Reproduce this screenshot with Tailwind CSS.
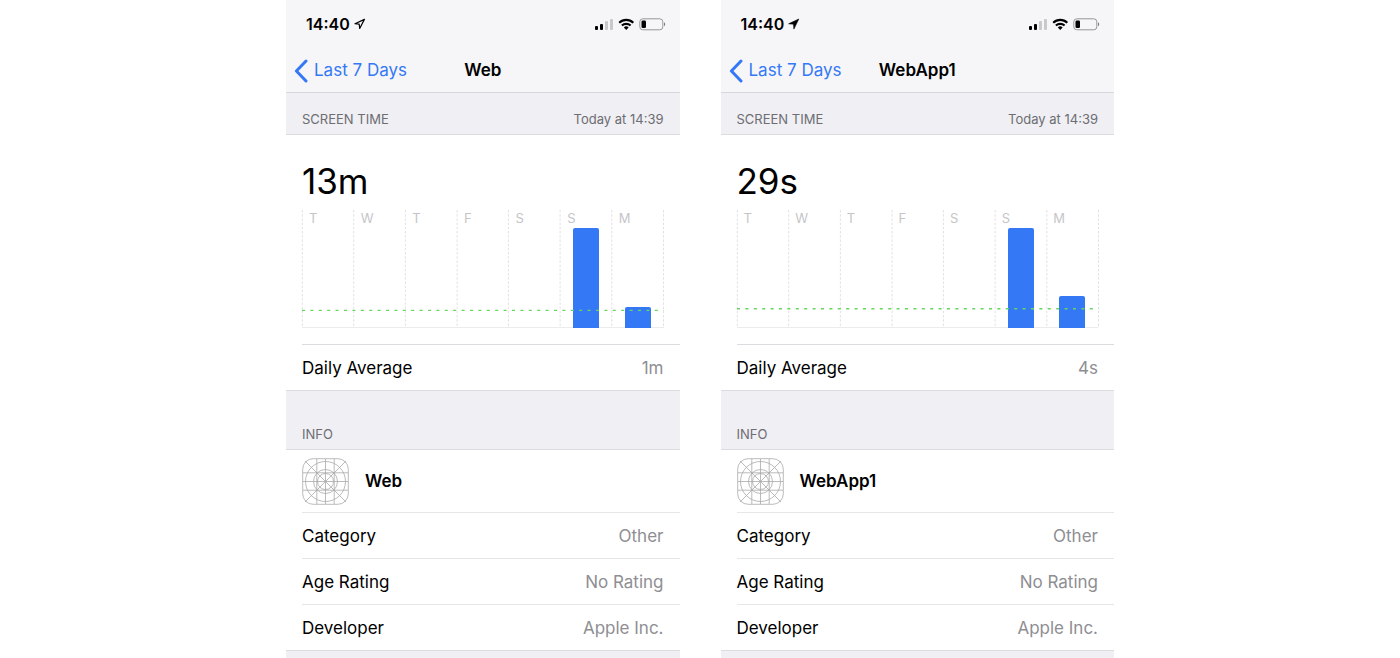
<!DOCTYPE html>
<html lang="en">
	<head>
		<meta charset="utf-8" />
		<meta name="viewport" content="width=device-width, initial-scale=1" />
		<title>Screen Time</title>
		<script src="https://cdn.jsdelivr.net/npm/@tailwindcss/browser@4"></script>
	</head>
	<body class="bg-white font-['Inter','Liberation_Sans',sans-serif] text-black">
		<!-- shared icons -->
		<svg class="hidden">
			<symbol id="status" viewBox="0 0 71 14">
				<rect x="0" y="9" width="3" height="4" rx="1" />
				<rect x="5" y="7" width="3" height="6" rx="1" />
				<rect x="10" y="4" width="3" height="9" rx="1" fill="#c9c9cb" />
				<rect x="15" y="2" width="3" height="11" rx="1" fill="#c9c9cb" />
				<g fill="none" stroke="#000" stroke-width="2.1">
					<path d="M24.2 5.7a10.2 10.2 0 0 1 14.1 0" />
					<path d="M26.9 8.6a6.3 6.3 0 0 1 8.7 0" />
				</g>
				<path d="M31.25 12.9l-2.4-2.5a3.5 3.5 0 0 1 4.8 0z" />
				<rect x="44.8" y="1.8" width="23" height="11" rx="3" fill="none" stroke="#98989b" />
				<path d="M69 5.3c1.6.6 1.6 3.4 0 4z" fill="#7c7c7f" />
				<rect x="46.5" y="3.5" width="4.5" height="7.6" rx="1.3" />
			</symbol>
			<symbol id="grid-icon" viewBox="0 0 47 47">
				<g fill="none" stroke="#a9a9ab" stroke-width="0.8">
					<rect x="0.7" y="0.7" width="45.6" height="45.6" rx="10.5" />
					<path d="M3 3l41 41M44 3L3 44" />
					<path d="M14.8 1v45M23.5 1v45M32.2 1v45M1 14.8h45M1 23.5h45M1 32.2h45" />
					<circle cx="23.5" cy="23.5" r="20" />
					<circle cx="23.5" cy="23.5" r="12" />
					<circle cx="23.5" cy="23.5" r="8" />
				</g>
			</symbol>
			<symbol id="back" viewBox="0 0 14 24">
				<path d="M12 2L2.4 12 12 22" fill="none" stroke="#3478f6" stroke-width="3" stroke-linecap="round" stroke-linejoin="round" />
			</symbol>
		</svg>

		<main class="mx-auto grid min-h-screen max-w-[828px] grid-cols-2 gap-[41px] overflow-hidden">
			<section class="bg-[#efeff4]">
				<header class="border-b border-[#d8d8dc] bg-[#f6f6f8]">
					<div class="flex h-12 items-center pl-5 pr-[14px]">
						<span class="text-[16px] font-semibold">14:40</span>
						<svg class="ml-1 size-3" viewBox="0 0 12 12">
							<path d="M10.4 1.4L1 5.7l4.2.5.5 4.3z" fill="none" stroke="#000" stroke-width="1.2" stroke-linejoin="round" />
						</svg>
						<svg class="ml-auto h-[14px] w-[71px]"><use href="#status" /></svg>
					</div>
					<nav class="flex h-11 items-center px-2 pt-0.5">
						<a href="#" class="flex flex-1 items-center gap-1.5 whitespace-nowrap text-[17px] text-[#3478f6]">
							<svg class="h-6 w-[14px]"><use href="#back" /></svg>
							Last 7 Days
						</a>
						<h1 class="text-[17px] font-semibold">Web</h1>
						<span class="flex-1"></span>
					</nav>
				</header>

				<div class="flex h-[41px] items-end justify-between px-4 pb-[5px] text-[13px] text-[#6d6d72]">
					<h2>SCREEN TIME</h2>
					<span>Today at 14:39</span>
				</div>

				<div class="border-y border-[#dcdce0] bg-white pl-4">
					<div class="pr-4 pt-6">
						<p class="text-[35px] leading-[44px]">13m</p>
						<div class="relative mt-[7px] grid h-[118px] grid-cols-7 text-[13px] leading-4 text-[#c5c5c8] shadow-[inset_0_-1px_0_#ececee]">
							<div class="pl-[7px]">T</div>
							<div class="pl-[7px]">W</div>
							<div class="pl-[7px]">T</div>
							<div class="pl-[7px]">F</div>
							<div class="pl-[7px]">S</div>
							<div class="flex flex-col">
								<span class="pl-[7px]">S</span>
								<div class="mx-auto mt-auto w-[26px] rounded-t-xs bg-[#3478f6]" style="height: 100px"></div>
							</div>
							<div class="flex flex-col">
								<span class="pl-[7px]">M</span>
								<div class="mx-auto mt-auto w-[26px] rounded-t-xs bg-[#3478f6]" style="height: 21px"></div>
							</div>
							<svg class="absolute inset-0 h-full w-full overflow-visible">
								<g stroke="#e2e2e5" stroke-dasharray="2.5 1.7">
									<line x1="0.1%" x2="0.1%" y2="100%" />
									<line x1="14.3%" x2="14.3%" y2="100%" />
									<line x1="28.6%" x2="28.6%" y2="100%" />
									<line x1="42.9%" x2="42.9%" y2="100%" />
									<line x1="57.1%" x2="57.1%" y2="100%" />
									<line x1="71.4%" x2="71.4%" y2="100%" />
									<line x1="85.7%" x2="85.7%" y2="100%" />
									<line x1="100%" x2="100%" y2="100%" />
								</g>
								<line x2="100%" y1="100.4" y2="100.4" stroke="#65d65c" stroke-width="1.4" stroke-dasharray="3 5.4" />
							</svg>
						</div>
					</div>
					<dl class="mt-4 flex h-[46px] items-center justify-between border-t border-[#dcdce0] pr-4 pt-0.5 text-[17px]">
						<dt>Daily Average</dt>
						<dd class="text-[#8e8e93]">1m</dd>
					</dl>
				</div>

				<h2 class="flex h-[58px] items-end px-4 pb-[5px] text-[13px] text-[#6d6d72]">INFO</h2>

				<div class="border-y border-[#dcdce0] bg-white pl-4 text-[17px]">
					<div class="flex h-[62px] items-center gap-4">
						<svg class="size-[47px]"><use href="#grid-icon" /></svg>
						<h3 class="pt-0.5 font-semibold">Web</h3>
					</div>
					<dl>
						<div class="flex h-[46px] items-center justify-between border-t border-[#e6e6e9] pr-4 pt-0.5">
							<dt>Category</dt>
							<dd class="text-[#8e8e93]">Other</dd>
						</div>
						<div class="flex h-[46px] items-center justify-between border-t border-[#e6e6e9] pr-4 pt-0.5">
							<dt>Age Rating</dt>
							<dd class="text-[#8e8e93]">No Rating</dd>
						</div>
						<div class="flex h-[46px] items-center justify-between border-t border-[#e6e6e9] pr-4 pt-0.5">
							<dt>Developer</dt>
							<dd class="text-[#8e8e93]">Apple Inc.</dd>
						</div>
					</dl>
				</div>
			</section>

			<section class="bg-[#efeff4]">
				<header class="border-b border-[#d8d8dc] bg-[#f6f6f8]">
					<div class="flex h-12 items-center pl-5 pr-[14px]">
						<span class="text-[16px] font-semibold">14:40</span>
						<svg class="ml-1 size-3" viewBox="0 0 12 12">
							<path d="M10.8 1L.6 5.8l4.9.4.4 4.9z" stroke="#000" stroke-width="0.6" stroke-linejoin="round" />
						</svg>
						<svg class="ml-auto h-[14px] w-[71px]"><use href="#status" /></svg>
					</div>
					<nav class="flex h-11 items-center px-2 pt-0.5">
						<a href="#" class="flex flex-1 items-center gap-1.5 whitespace-nowrap text-[17px] text-[#3478f6]">
							<svg class="h-6 w-[14px]"><use href="#back" /></svg>
							Last 7 Days
						</a>
						<h1 class="text-[17px] font-semibold">WebApp1</h1>
						<span class="flex-1"></span>
					</nav>
				</header>

				<div class="flex h-[41px] items-end justify-between px-4 pb-[5px] text-[13px] text-[#6d6d72]">
					<h2>SCREEN TIME</h2>
					<span>Today at 14:39</span>
				</div>

				<div class="border-y border-[#dcdce0] bg-white pl-4">
					<div class="pr-4 pt-6">
						<p class="text-[35px] leading-[44px]">29s</p>
						<div class="relative mt-[7px] grid h-[118px] grid-cols-7 text-[13px] leading-4 text-[#c5c5c8] shadow-[inset_0_-1px_0_#ececee]">
							<div class="pl-[7px]">T</div>
							<div class="pl-[7px]">W</div>
							<div class="pl-[7px]">T</div>
							<div class="pl-[7px]">F</div>
							<div class="pl-[7px]">S</div>
							<div class="flex flex-col">
								<span class="pl-[7px]">S</span>
								<div class="mx-auto mt-auto w-[26px] rounded-t-xs bg-[#3478f6]" style="height: 100px"></div>
							</div>
							<div class="flex flex-col">
								<span class="pl-[7px]">M</span>
								<div class="mx-auto mt-auto w-[26px] rounded-t-xs bg-[#3478f6]" style="height: 32px"></div>
							</div>
							<svg class="absolute inset-0 h-full w-full overflow-visible">
								<g stroke="#e2e2e5" stroke-dasharray="2.5 1.7">
									<line x1="0.1%" x2="0.1%" y2="100%" />
									<line x1="14.3%" x2="14.3%" y2="100%" />
									<line x1="28.6%" x2="28.6%" y2="100%" />
									<line x1="42.9%" x2="42.9%" y2="100%" />
									<line x1="57.1%" x2="57.1%" y2="100%" />
									<line x1="71.4%" x2="71.4%" y2="100%" />
									<line x1="85.7%" x2="85.7%" y2="100%" />
									<line x1="100%" x2="100%" y2="100%" />
								</g>
								<line x2="100%" y1="98.7" y2="98.7" stroke="#65d65c" stroke-width="1.4" stroke-dasharray="3 5.4" />
							</svg>
						</div>
					</div>
					<dl class="mt-4 flex h-[46px] items-center justify-between border-t border-[#dcdce0] pr-4 pt-0.5 text-[17px]">
						<dt>Daily Average</dt>
						<dd class="text-[#8e8e93]">4s</dd>
					</dl>
				</div>

				<h2 class="flex h-[58px] items-end px-4 pb-[5px] text-[13px] text-[#6d6d72]">INFO</h2>

				<div class="border-y border-[#dcdce0] bg-white pl-4 text-[17px]">
					<div class="flex h-[62px] items-center gap-4">
						<svg class="size-[47px]"><use href="#grid-icon" /></svg>
						<h3 class="pt-0.5 font-semibold">WebApp1</h3>
					</div>
					<dl>
						<div class="flex h-[46px] items-center justify-between border-t border-[#e6e6e9] pr-4 pt-0.5">
							<dt>Category</dt>
							<dd class="text-[#8e8e93]">Other</dd>
						</div>
						<div class="flex h-[46px] items-center justify-between border-t border-[#e6e6e9] pr-4 pt-0.5">
							<dt>Age Rating</dt>
							<dd class="text-[#8e8e93]">No Rating</dd>
						</div>
						<div class="flex h-[46px] items-center justify-between border-t border-[#e6e6e9] pr-4 pt-0.5">
							<dt>Developer</dt>
							<dd class="text-[#8e8e93]">Apple Inc.</dd>
						</div>
					</dl>
				</div>
			</section>
		</main>
	</body>
</html>
